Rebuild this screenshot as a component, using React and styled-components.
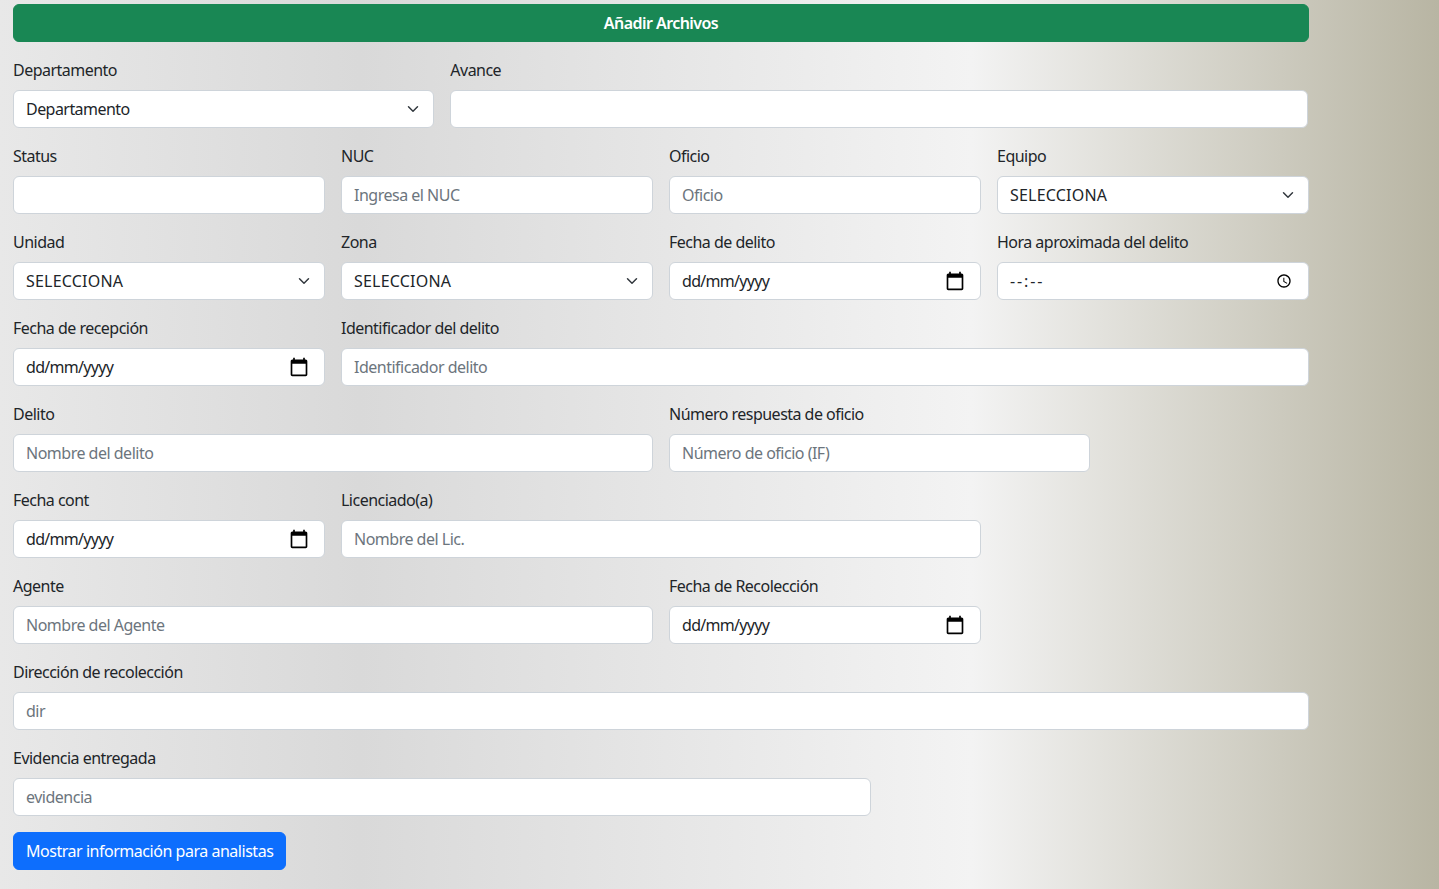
import styled, { createGlobalStyle } from 'styled-components';

const GlobalStyle = createGlobalStyle`
  * {
    box-sizing: border-box;
  }
  html, body {
    margin: 0;
    min-height: 100%;
  }
  body {
    font-family: "Noto Sans", sans-serif;
    font-size: 16px;
    line-height: 24px;
    color: #212529;
    background: linear-gradient(90deg, #e8e8e8 0%, #d9d9d9 25%, #f3f3f3 67.5%, #b8b5a3 100%);
    background-attachment: fixed;
  }
`;

const chevron = `url("data:image/svg+xml,%3csvg xmlns='http://www.w3.org/2000/svg' viewBox='0 0 16 16'%3e%3cpath fill='none' stroke='%23343a40' stroke-linecap='round' stroke-linejoin='round' stroke-width='2' d='m2 5 6 6 6-6'/%3e%3c/svg%3e")`;

const Page = styled.div`
  padding: 4px 130px 19px 13px;
`;

const Form = styled.form`
  display: grid;
  grid-template-columns: repeat(12, 1fr);
  gap: 16px;
`;

const Field = styled.div`
  grid-column: span ${({ $span }) => $span};
  margin-right: ${({ $span }) => ($span === 8 ? '1px' : '0')};
`;

const Spacer = styled.div`
  grid-column: span ${({ $span }) => $span};
`;

const Label = styled.label`
  display: block;
  margin-bottom: 8px;
  letter-spacing: -0.52px;
`;

const controlStyles = `
  display: block;
  width: 100%;
  height: 38px;
  padding: 6px 12px;
  font-family: inherit;
  font-size: 16px;
  line-height: 24px;
  letter-spacing: -0.5px;
  color: #212529;
  background-color: #fff;
  border: 1px solid #ced4da;
  border-radius: 6px;
  outline: none;
`;

const Input = styled.input`
  ${controlStyles}
  letter-spacing: ${({ $tracking }) => $tracking || '-0.5px'};
  &::placeholder {
    color: #6c757d;
  }
`;

const Select = styled.select`
  ${controlStyles}
  letter-spacing: ${({ $tracking }) => $tracking || '-0.55px'};
  appearance: none;
  padding-right: 36px;
  background-image: ${chevron};
  background-repeat: no-repeat;
  background-position: right 12px center;
  background-size: 16px 12px;
`;

const PickerWrap = styled.div`
  position: relative;
`;

const PickerIcon = styled.svg`
  position: absolute;
  top: 50%;
  right: ${({ $right }) => $right}px;
  width: ${({ $size }) => $size}px;
  height: ${({ $size }) => $size}px;
  transform: translateY(-50%);
  fill: #000;
`;

const SubmitBar = styled.button`
  grid-column: span 12;
  height: 38px;
  font-family: inherit;
  font-size: 16px;
  font-weight: 600;
  letter-spacing: -0.55px;
  color: #fff;
  background: #198754;
  border: 1px solid #198754;
  border-radius: 6px;
`;

const PrimaryButton = styled.button`
  grid-column: span 12;
  justify-self: start;
  height: 38px;
  padding: 6px 12px;
  font-family: inherit;
  font-size: 16px;
  letter-spacing: -0.47px;
  color: #fff;
  background: #0d6efd;
  border: 1px solid #0d6efd;
  border-radius: 6px;
`;

const TextField = ({ label, span, placeholder }) => (
  <Field $span={span}>
    <Label>{label}</Label>
    <Input type="text" placeholder={placeholder} />
  </Field>
);

const SelectField = ({ label, span, option }) => (
  <Field $span={span}>
    <Label>{label}</Label>
    <Select $tracking={option === 'SELECCIONA' ? '0.2px' : undefined}>
      <option>{option}</option>
    </Select>
  </Field>
);

const DateField = ({ label, span }) => (
  <Field $span={span}>
    <Label>{label}</Label>
    <PickerWrap>
      <Input type="text" readOnly value="dd/mm/yyyy" $tracking="-0.7px" />
      <PickerIcon $size={20} $right={16} viewBox="0 0 24 24">
        <path d="M20 3h-1V1h-2v2H7V1H5v2H4c-1.1 0-2 .9-2 2v16c0 1.1.9 2 2 2h16c1.1 0 2-.9 2-2V5c0-1.1-.9-2-2-2zm0 18H4V8h16v13z" />
      </PickerIcon>
    </PickerWrap>
  </Field>
);

const TimeField = ({ label, span }) => (
  <Field $span={span}>
    <Label>{label}</Label>
    <PickerWrap>
      <Input type="text" readOnly value="--:--" $tracking="1.9px" />
      <PickerIcon $size={16} $right={17} viewBox="0 0 24 24">
        <path d="M11.99 2C6.47 2 2 6.48 2 12s4.47 10 9.99 10C17.52 22 22 17.52 22 12S17.52 2 11.99 2zM12 20c-4.42 0-8-3.58-8-8s3.58-8 8-8 8 3.58 8 8-3.58 8-8 8zm.5-13H11v6l5.25 3.15.75-1.23-4.5-2.67z" />
      </PickerIcon>
    </PickerWrap>
  </Field>
);

export default function App() {
  return (
    <Page>
      <GlobalStyle />
      <Form>
        <SubmitBar type="button">Añadir Archivos</SubmitBar>

        <SelectField label="Departamento" span={4} option="Departamento" />
        <TextField label="Avance" span={8} />

        <TextField label="Status" span={3} />
        <TextField label="NUC" span={3} placeholder="Ingresa el NUC" />
        <TextField label="Oficio" span={3} placeholder="Oficio" />
        <SelectField label="Equipo" span={3} option="SELECCIONA" />

        <SelectField label="Unidad" span={3} option="SELECCIONA" />
        <SelectField label="Zona" span={3} option="SELECCIONA" />
        <DateField label="Fecha de delito" span={3} />
        <TimeField label="Hora aproximada del delito" span={3} />

        <DateField label="Fecha de recepción" span={3} />
        <TextField label="Identificador del delito" span={9} placeholder="Identificador delito" />

        <TextField label="Delito" span={6} placeholder="Nombre del delito" />
        <TextField label="Número respuesta de oficio" span={4} placeholder="Número de oficio (IF)" />
        <Spacer $span={2} />

        <DateField label="Fecha cont" span={3} />
        <TextField label="Licenciado(a)" span={6} placeholder="Nombre del Lic." />
        <Spacer $span={3} />

        <TextField label="Agente" span={6} placeholder="Nombre del Agente" />
        <DateField label="Fecha de Recolección" span={3} />
        <Spacer $span={3} />

        <TextField label="Dirección de recolección" span={12} placeholder="dir" />

        <TextField label="Evidencia entregada" span={8} placeholder="evidencia" />
        <Spacer $span={4} />

        <PrimaryButton type="button">Mostrar información para analistas</PrimaryButton>
      </Form>
    </Page>
  );
}
